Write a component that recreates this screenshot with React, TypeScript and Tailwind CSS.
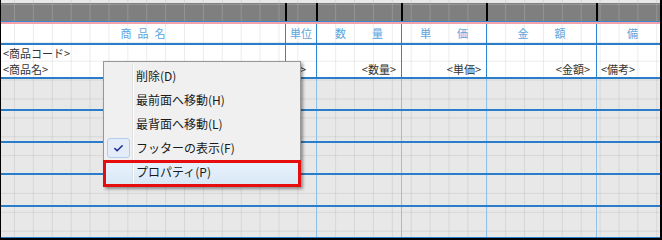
import { Check } from 'lucide-react'

const cols = 'grid grid-cols-[284px_31px_85px_85px_110px_64px] w-[659px]'

const gridLines =
  'bg-fixed bg-[linear-gradient(to_right,rgba(0,0,0,0.075)_1px,transparent_1px),linear-gradient(to_bottom,rgba(0,0,0,0.075)_1px,transparent_1px)] bg-size-[18.9px_18.9px] bg-position-[14px_4px]'
const darkLines =
  'bg-fixed bg-[linear-gradient(to_right,rgba(255,255,255,0.16)_1px,transparent_1px),linear-gradient(to_bottom,rgba(255,255,255,0.16)_1px,transparent_1px)] bg-size-[18.9px_18.9px] bg-position-[14px_4px]'

const blueLine = 'h-[2px] w-[659px] bg-[#2a7dc8]'
const vBlue = 'border-l border-[#2f86d2]'
const vLight = 'border-l border-[#8cc2ec]'

const menuItems = [
  { label: '削除(D)' },
  { label: '最前面へ移動(H)' },
  { label: '最背面へ移動(L)' },
  { label: 'フッターの表示(F)', checked: true },
  { label: 'プロパティ(P)', active: true },
]

function HeaderPair({ a, b }: { a: string; b: string }) {
  return (
    <div className="flex h-full items-center justify-center gap-[26px]">
      <span>{a}</span>
      <span>{b}</span>
    </div>
  )
}

function BodyRow() {
  return (
    <>
      <div className={`${cols} h-[30px] bg-[#e8e8e8] ${gridLines}`}>
        <div />
        <div />
        <div className={vLight} />
        <div className={vLight} />
        <div className={vLight} />
        <div className={vLight} />
      </div>
      <div className={blueLine} />
    </>
  )
}

function ContextMenu() {
  return (
    <div className="absolute left-[102px] top-[61px] w-[198px] border border-[#979797] bg-[#f0f0f0] px-[2px] py-[2px] shadow-[2px_2px_3px_rgba(0,0,0,0.4)] font-['Noto_Sans_CJK_JP',sans-serif] text-[12px] text-[#1a1a1a]">
      {menuItems.map((item) => (
        <div
          key={item.label}
          className={`relative flex h-6 items-stretch ${item.active ? 'bg-[linear-gradient(to_bottom,#eaf3fc,#d9e8f6)]' : ''}`}
        >
          <div className="flex w-[27px] items-center border-r border-[#e0e0e0] shadow-[1px_0_0_#ffffff]">
            {item.checked && (
              <div className="ml-[1px] flex h-[20px] w-[23px] items-center justify-center rounded-[3px] border border-[#b3cdee] bg-[#e3ecf8]">
                <Check className="h-[11px] w-[11px] text-[#1f2f8f]" strokeWidth={3.5} />
              </div>
            )}
          </div>
          <span className="flex items-center pl-[3px] leading-none">{item.label}</span>
          {item.active && (
            <div className="absolute -left-[3px] -right-[3px] top-0 -bottom-[3px] border-[3px] border-[#e50d0d]" />
          )}
        </div>
      ))}
    </div>
  )
}

export default function App() {
  return (
    <div className="relative h-[240px] w-[662px] overflow-hidden border-b-2 border-l border-r-2 border-black bg-[#e8e8e8] font-['Noto_Sans_CJK_JP',sans-serif]">
      <div className={`h-[3px] w-[659px] bg-[#e8e8e8] ${gridLines}`} />

      <div className={`${cols} h-[18px] bg-[#7f7f7f] ${darkLines}`}>
        <div />
        <div className="border-l-2 border-black" />
        <div className="border-l-2 border-black" />
        <div className="border-l-2 border-black" />
        <div className="border-l-2 border-black" />
        <div className="border-l-2 border-black" />
      </div>
      <div className="h-px w-[659px] bg-[#3a8ad2]" />
      <div className="h-[2px] w-[659px] bg-[#f5a0aa]" />

      <div className={`${cols} h-[19px] bg-white text-[11px] leading-none text-[#5aa5de] ${gridLines}`}>
        <div className="flex items-center justify-center gap-[6px]">
          <span>商</span>
          <span>品</span>
          <span>名</span>
        </div>
        <div className={`${vBlue} flex items-center justify-center`}>単位</div>
        <div className={vBlue}>
          <HeaderPair a="数" b="量" />
        </div>
        <div className={vBlue}>
          <HeaderPair a="単" b="価" />
        </div>
        <div className={vBlue}>
          <HeaderPair a="金" b="額" />
        </div>
        <div className={`${vBlue} flex items-center pl-[30px]`}>備</div>
      </div>
      <div className={blueLine} />

      <div className={`${cols} h-4 bg-white text-[11px] leading-none text-[#333] ${gridLines}`}>
        <div className="flex items-center pl-[2px]">&lt;商品コード&gt;</div>
        <div className={vBlue} />
        <div className={vBlue} />
        <div className={vBlue} />
        <div className={vBlue} />
        <div className={vBlue} />
      </div>
      <div className={`${cols} h-4 bg-white text-[11px] leading-none text-[#333] ${gridLines}`}>
        <div className="flex items-center pl-[2px]">&lt;商品名&gt;</div>
        <div className={`${vBlue} flex items-center justify-end whitespace-nowrap pr-[10px]`}>&lt;単位&gt;</div>
        <div className={`${vBlue} flex items-center justify-end pr-[5px]`}>&lt;数量&gt;</div>
        <div className={`${vBlue} flex items-center justify-end pr-[5px]`}>&lt;単価&gt;</div>
        <div className={`${vBlue} flex items-center justify-end pr-[6px]`}>&lt;金額&gt;</div>
        <div className={`${vBlue} flex items-center pl-[4px]`}>&lt;備考&gt;</div>
      </div>
      <div className={blueLine} />

      <BodyRow />
      <BodyRow />
      <BodyRow />
      <BodyRow />
      <BodyRow />

      <ContextMenu />
    </div>
  )
}
